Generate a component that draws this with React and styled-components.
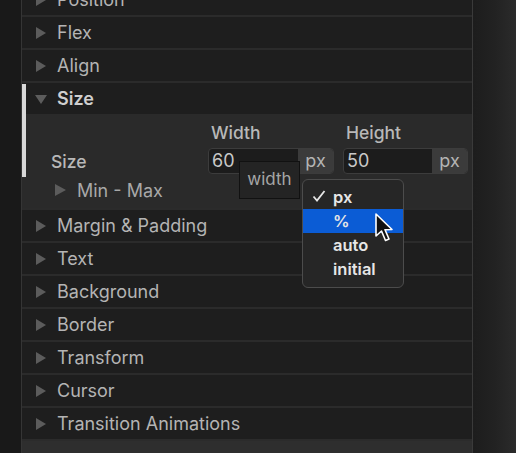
import React from 'react'
import styled, { createGlobalStyle } from 'styled-components'

const GlobalStyle = createGlobalStyle`
  html, body {
    margin: 0;
    padding: 0;
    height: 100%;
    overflow: hidden;
    background: #1a1a1a;
  }
  body {
    font-family: Inter, "Noto Sans", sans-serif;
  }
  #root { height: 100%; }
`

const Page = styled.div`
  display: flex;
  height: 453px;
  overflow: hidden;
`

const LeftStrip = styled.div`
  width: 21px;
  background: #191919;
  border-right: 1px solid #353535;
`

const RightStrip = styled.div`
  flex: 1;
  background: linear-gradient(90deg, #1d1d1d 0%, #222 50%, #2b2b2b 100%);
`

const Panel = styled.div`
  width: 450px;
  background: #2e2e2e;
  border-right: 1px solid #3a3a3a;
  display: flex;
  flex-direction: column;
  margin-top: -16px;
`

const Section = styled.div`
  border-bottom: 2px solid #2b2b2b;
  background: #1e1e1e;
`

const Header = styled.div`
  height: 31px;
  display: flex;
  align-items: center;
  gap: 10px;
  padding-left: 13px;
  font-size: 18px;
  color: ${p => (p.open ? '#cfcfcf' : '#b4b4b4')};
  font-weight: ${p => (p.open ? 600 : 400)};
  position: relative;
  ${p =>
    p.open &&
    `&::before {
      content: '';
      position: absolute;
      left: 0;
      top: 1px;
      width: 4px;
      height: 93px;
      background: #d8d8d8;
      z-index: 2;
    }`}
`

const Caret = ({ open }) => (
  <svg width="12" height="12" viewBox="0 0 12 12">
    {open ? (
      <polygon points="0,2 12,2 6,11" fill="#5c5c5c" />
    ) : (
      <polygon points="1,0 11,6 1,12" fill="#5c5c5c" />
    )}
  </svg>
)

const Body = styled.div`
  background: #2a2a2a;
  height: 94px;
  position: relative;
  display: grid;
  grid-template-columns: 177px 126px 125px;
  grid-template-rows: 34px 26px 34px;
  column-gap: 9px;
  align-items: center;
`

const FieldLabel = styled.div`
  font-size: 17.5px;
  font-weight: 500;
  color: #b8b8b8;
  padding-left: 3px;
  padding-top: 3px;
`

const RowLabel = styled.div`
  font-size: 17.5px;
  font-weight: 500;
  color: #b8b8b8;
  padding-left: 29px;
`

const Input = styled.div`
  height: 26px;
  box-sizing: border-box;
  border: 1px solid #3c3c3c;
  border-radius: 4px;
  background: #1c1c1c;
  display: flex;
  overflow: hidden;
`

const Value = styled.div`
  flex: 1;
  font-size: 18px;
  color: #c8c8c8;
  padding-left: 3px;
  line-height: 24px;
`

const Unit = styled.div`
  width: 35px;
  background: #3b3b3b;
  color: #b4b4b4;
  font-size: 18px;
  text-align: center;
  line-height: 23px;
`

const SubHeader = styled.div`
  grid-column: 1 / 4;
  display: flex;
  align-items: center;
  gap: 11px;
  padding-left: 33px;
  font-size: 18px;
  color: #a8a8a8;
  align-self: start;
  height: 32px;
`

const Tooltip = styled.div`
  position: absolute;
  left: 217px;
  top: 47px;
  width: 61px;
  height: 38px;
  box-sizing: border-box;
  background: #242424;
  border: 1px solid #111;
  color: #a6a6a6;
  font-size: 17px;
  display: flex;
  align-items: center;
  justify-content: center;
  padding-bottom: 2px;
`

const Menu = styled.div`
  position: absolute;
  left: 280px;
  top: 65px;
  width: 102px;
  box-sizing: border-box;
  padding: 5px 0 6px;
  background: #262626;
  border: 1px solid #4c4c4c;
  border-radius: 6px;
  z-index: 5;
`

const MenuItem = styled.div`
  height: 24px;
  display: flex;
  align-items: center;
  padding-left: 30px;
  position: relative;
  font-size: 16.5px;
  font-weight: 600;
  color: #e6e6e6;
  background: ${p => (p.active ? '#0b5cd5' : 'transparent')};
`

const Check = styled.span`
  position: absolute;
  left: 9px;
  top: 4px;
  display: flex;
`

const Pointer = styled.svg`
  position: absolute;
  left: 352px;
  top: 99px;
  z-index: 6;
`

const sections = [
  'Position',
  'Flex',
  'Align',
  'Size',
  'Margin & Padding',
  'Text',
  'Background',
  'Border',
  'Transform',
  'Cursor',
  'Transition Animations',
]

const SizeBody = () => (
  <Body>
    <div />
    <FieldLabel>Width</FieldLabel>
    <FieldLabel>Height</FieldLabel>
    <RowLabel>Size</RowLabel>
    <Input>
      <Value>60</Value>
      <Unit>px</Unit>
    </Input>
    <Input>
      <Value>50</Value>
      <Unit>px</Unit>
    </Input>
    <SubHeader>
      <svg width="11" height="12" viewBox="0 0 11 12">
        <polygon points="0,0 11,6 0,12" fill="#5c5c5c" />
      </svg>
      Min - Max
    </SubHeader>
    <Tooltip>width</Tooltip>
    <Menu>
      <MenuItem>
        <Check>
          <svg width="14" height="14" viewBox="0 0 14 14">
            <path d="M1.5 7.5 L5 11.5 L12.5 2" stroke="#e6e6e6" strokeWidth="1.8" fill="none" />
          </svg>
        </Check>
        px
      </MenuItem>
      <MenuItem active>%</MenuItem>
      <MenuItem>auto</MenuItem>
      <MenuItem>initial</MenuItem>
    </Menu>
    <Pointer width="20" height="30" viewBox="0 0 20 30">
      <path
        d="M2 1 L2 23 L7.5 18 L11.5 27.5 L15 26 L11 16.8 L18 16.5 Z"
        fill="#111"
        stroke="#fff"
        strokeWidth="1.6"
        strokeLinejoin="round"
      />
    </Pointer>
  </Body>
)

export default function App() {
  return (
    <>
      <GlobalStyle />
      <Page>
        <LeftStrip />
        <Panel>
          {sections.map(name => {
            const open = name === 'Size'
            return (
              <Section key={name}>
                <Header open={open}>
                  <Caret open={open} />
                  {name}
                </Header>
                {open && <SizeBody />}
              </Section>
            )
          })}
        </Panel>
        <RightStrip />
      </Page>
    </>
  )
}
